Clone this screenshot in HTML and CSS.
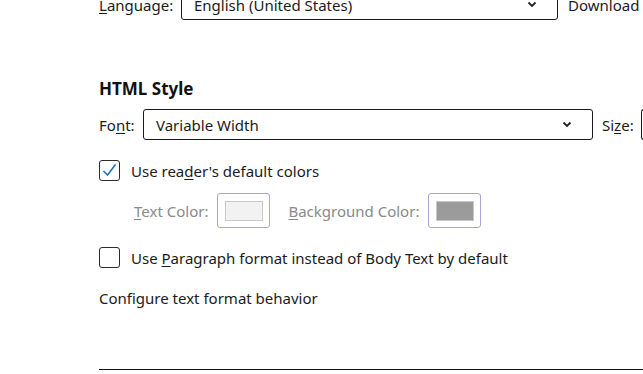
FILE: index.html
```html
<!DOCTYPE html>
<html>
<head>
<meta charset="utf-8">
<link rel="stylesheet" href="styles.css">
</head>
<body>
<div class="page">
  <div class="row lang-row">
    <span class="label"><u>L</u>anguage:</span>
    <div class="select lang-select">
      <span>English (United States)</span>
      <svg class="chev" width="10" height="7" viewBox="0 0 10 7"><path d="M1.5 1.5 L5 5 L8.5 1.5" fill="none" stroke="#222" stroke-width="1.8"/></svg>
    </div>
    <span class="label">Download</span>
  </div>

  <h2 class="heading">HTML Style</h2>

  <div class="row font-row">
    <span class="label">Fo<u>n</u>t:</span>
    <div class="select font-select">
      <span>Variable Width</span>
      <svg class="chev" width="10" height="7" viewBox="0 0 10 7"><path d="M1.5 1.5 L5 5 L8.5 1.5" fill="none" stroke="#222" stroke-width="1.8"/></svg>
    </div>
    <span class="label">Si<u>z</u>e:</span>
    <div class="size-box"></div>
  </div>

  <div class="row check-row first">
    <span class="checkbox checked">
      <svg width="15" height="15" viewBox="0 0 15 15"><path d="M1.5 8 L5.5 12 L13.5 1.5" fill="none" stroke="#1e72c6" stroke-width="1.6"/></svg>
    </span>
    <span class="text">Use rea<u>d</u>er's default colors</span>
  </div>

  <div class="row color-row">
    <span class="label dim"><u>T</u>ext Color:</span>
    <div class="swatch-btn"><div class="swatch light"></div></div>
    <span class="label dim bg-label"><u>B</u>ackground Color:</span>
    <div class="swatch-btn"><div class="swatch dark"></div></div>
  </div>

  <div class="row check-row second">
    <span class="checkbox"></span>
    <span class="text">Use <u>P</u>aragraph format instead of Body Text by default</span>
  </div>

  <p class="desc">Configure text format behavior</p>

  <hr class="sep">
</div>
</body>
</html>
```

FILE: styles.css
```css
html, body {
  margin: 0;
  padding: 0;
  background: #fff;
  overflow: hidden;
}
body {
  font-family: "Noto Sans", "Open Sans", sans-serif;
  font-size: 15px;
  color: #1b1b1b;
}
.page {
  padding-left: 99px;
  margin-top: -11px;
}
u {
  text-decoration-thickness: 1px;
  text-underline-offset: 2px;
}
.row {
  display: flex;
  align-items: center;
  white-space: nowrap;
}
.row > * { flex: none; }
.select {
  box-sizing: border-box;
  height: 31px;
  border: 1px solid #1a1a1a;
  border-radius: 3px;
  display: flex;
  align-items: center;
  justify-content: space-between;
  padding: 0 20px 0 12px;
  background: #fff;
}
.lang-row .label:first-child { width: 82px; }
.lang-select { width: 377px; margin-right: 10px; }
.heading {
  font-size: 17px;
  font-weight: 700;
  margin: 57px 0 0;
  line-height: 24px;
  color: #111;
}
.font-row { margin-top: 8px; }
.font-row .label:first-child { width: 44px; }
.font-select { width: 450px; margin-right: 9px; }
.size-box {
  box-sizing: border-box;
  width: 10px;
  height: 31px;
  border: 1px solid #1a1a1a;
  border-right: none;
  border-radius: 3px 0 0 3px;
  margin-left: 7px;
}
.check-row.first { margin-top: 20px; }
.check-row.second { margin-top: 19px; }
.checkbox {
  box-sizing: border-box;
  width: 21px;
  height: 21px;
  border: 1px solid #2b2b2b;
  border-radius: 3px;
  display: inline-flex;
  align-items: center;
  justify-content: center;
  margin-right: 11px;
}
.color-row { margin-top: 12px; padding-left: 35px; }
.dim { color: #8a8a8a; }
.swatch-btn {
  box-sizing: border-box;
  width: 53px;
  height: 35px;
  border: 1px solid #a9a3d6;
  border-radius: 3px;
  display: flex;
  align-items: center;
  justify-content: center;
  margin-left: 9px;
}
.bg-label { margin-left: 18px; }
.swatch {
  box-sizing: border-box;
  width: 38px;
  height: 20px;
  border: 1px solid #c9c9c9;
}
.swatch.light { background: #f2f2f2; }
.swatch.dark { background: #9b9b9b; }
.desc {
  margin: 19px 0 0;
  line-height: 22px;
}
.sep {
  margin: 60px 0 0;
  border: none;
  border-top: 1px solid #111;
  height: 0;
}
```
